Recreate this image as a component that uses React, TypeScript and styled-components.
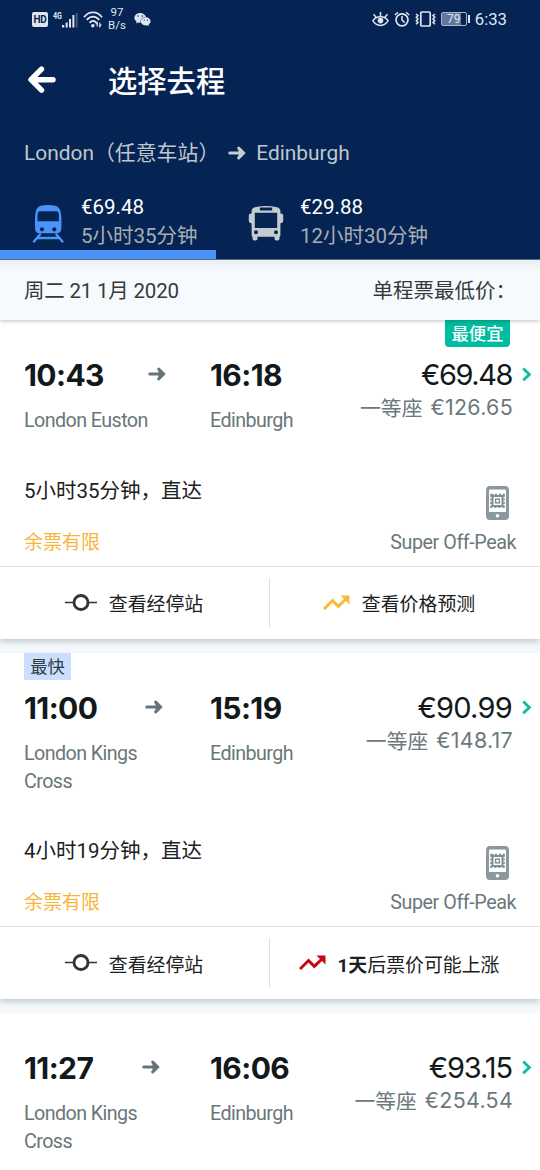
import React from "react";
import styled, { createGlobalStyle } from "styled-components";
import { FaWeixin } from "react-icons/fa";

const Global = createGlobalStyle`
  * { box-sizing: border-box; }
  html, body { margin: 0; padding: 0; }
  body {
    width: 540px;
    height: 1170px;
    overflow: hidden;
    background: #f4f8fb;
    font-family: Roboto, "Noto Sans CJK SC", sans-serif;
    color: #1b2023;
  }
  svg { display: block; flex: none; }
`;

const Screen = styled.div`
  width: 540px;
  height: 1170px;
  overflow: hidden;
  display: flex;
  flex-direction: column;
`;

const Header = styled.header`
  flex: none;
  height: 260px;
  background: #052454;
  display: flex;
  flex-direction: column;
  border-bottom: 1px solid #5f7391;
`;

const StatusBar = styled.div`
  height: 38px;
  flex: none;
  display: flex;
  align-items: center;
  justify-content: space-between;
  padding: 0 32px;
  color: #dfe6f0;
`;

const StatusGroup = styled.div<{ $gap: number; $indent?: number }>`
  display: flex;
  align-items: center;
  gap: ${(p) => p.$gap}px;
  padding-left: ${(p) => p.$indent ?? 0}px;
`;

const HdBadge = styled.span`
  width: 16px;
  height: 15px;
  border-radius: 2px;
  background: #dfe6f0;
  color: #052454;
  font: 700 10px/15px Roboto, sans-serif;
  text-align: center;
  letter-spacing: -0.3px;
`;

const NetSpeed = styled.span`
  width: 18px;
  font-size: 11.5px;
  line-height: 13.5px;
  text-align: center;
  white-space: nowrap;
`;

const Battery = styled.span`
  width: 26px;
  height: 14px;
  border: 1px solid #aab5c8;
  border-radius: 2px;
  background: linear-gradient(90deg, #64769a 79%, transparent 79%);
  font-size: 12px;
  line-height: 13px;
  text-align: center;
`;

const BatteryTip = styled.span`
  width: 2px;
  height: 8px;
  margin-left: 1px;
  background: #dfe6f0;
`;

const Clock = styled.span`
  font-size: 16.7px;
  margin: 0 1px 0 5px;
`;

const TitleBar = styled.div`
  height: 84px;
  flex: none;
  padding-left: 27px;
  display: flex;
  align-items: center;
  gap: 52px;
`;

const Title = styled.h1`
  margin: 0;
  padding-top: 4px;
  font-size: 29.3px;
  font-weight: 500;
  line-height: 40px;
  color: #fff;
`;

const RouteLine = styled.div`
  height: 60px;
  flex: none;
  display: flex;
  align-items: center;
  padding: 1px 0 0 24px;
  font-size: 20.9px;
  line-height: 30px;
  color: #bfc7cd;
  white-space: pre;
`;

const RouteArrow = styled.span`
  margin: 0 10px 0 9px;
`;

const Tabs = styled.nav`
  flex: 1;
  display: flex;
`;

const Tab = styled.div<{ $active?: boolean; $width: number }>`
  width: ${(p) => p.$width}px;
  display: flex;
  gap: 16px;
  padding: 11px 0 0 32px;
  border-bottom: ${(p) => (p.$active ? "9px solid #4a94f9" : "0")};
`;

const TabIcon = styled.span`
  padding-top: 11px;
`;

const TabText = styled.div`
  display: flex;
  flex-direction: column;
  font-size: 20.5px;
  line-height: 28.5px;
  color: #a9adb5;
  white-space: nowrap;
`;

const TabPrice = styled.span`
  color: #fff;
`;

const DateBar = styled.div`
  flex: none;
  height: 60px;
  padding: 0 24px 2px;
  display: flex;
  justify-content: space-between;
  align-items: center;
  background: linear-gradient(#e9eff4, #f6fafd 12px);
  color: #36393b;
  font-size: 20.5px;
  position: relative;
  z-index: 1;
  box-shadow: 0 1px 4px rgba(0, 0, 0, 0.25);
`;

const DateText = styled.span`
  letter-spacing: -0.2px;
`;

const Card = styled.article<{ $last: boolean }>`
  flex: ${(p) => (p.$last ? "1" : "none")};
  position: relative;
  margin-bottom: ${(p) => (p.$last ? 0 : 14)}px;
  background: #fff;
  box-shadow: 0 2px 6px rgba(40, 60, 70, 0.28);
  clip-path: inset(0 0 -14px 0);
`;

const CheapBadge = styled.span`
  position: absolute;
  top: 0;
  right: 30px;
  width: 65px;
  height: 27px;
  border-radius: 0 0 4px 4px;
  background: #00bda1;
  color: #fff;
  font-size: 17.3px;
  font-weight: 500;
  line-height: 29px;
  text-align: center;
`;

const FastBadge = styled.span`
  position: absolute;
  top: 0;
  left: 24px;
  width: 47px;
  height: 27px;
  background: #cbdffc;
  color: #303a44;
  font-size: 17.3px;
  line-height: 29px;
  text-align: center;
`;

const Summary = styled.div`
  padding: 37px 0 0 24px;
  display: flex;
`;

const Leg = styled.div<{ $width: number }>`
  width: ${(p) => p.$width}px;
`;

const TimeRow = styled.div<{ $width?: number }>`
  width: ${(p) => (p.$width ? `${p.$width}px` : "auto")};
  height: 36px;
  display: flex;
  align-items: center;
  justify-content: space-between;

  svg { margin-bottom: 2px; }
`;

const Time = styled.span`
  font: 700 30px/36px Inter, sans-serif;
  letter-spacing: -0.6px;
  color: #12191b;
  white-space: nowrap;
`;

const Station = styled.div`
  margin-top: 14.4px;
  width: 130px;
  font-size: 19.7px;
  line-height: 27.4px;
  letter-spacing: -0.57px;
  color: #697679;
`;

const PriceCol = styled.div`
  flex: 1;
  padding-right: 8px;
  display: flex;
  flex-direction: column;
  align-items: flex-end;
`;

const PriceRow = styled.div`
  height: 36px;
  display: flex;
  align-items: center;
  gap: 10px;
`;

const Price = styled.span<{ $tracking: number }>`
  font: 400 29px/36px Inter, sans-serif;
  letter-spacing: ${(p) => p.$tracking}px;
  color: #12191b;
`;

const FirstClass = styled.div`
  margin-right: 19px;
  display: flex;
  gap: 8px;
  font: 400 20.8px/28px "Noto Sans CJK SC", sans-serif;
  color: #6b787c;
  white-space: nowrap;
`;

const FirstPrice = styled.span`
  font: 400 21.4px/28px Inter, sans-serif;
  letter-spacing: 0.3px;
`;

const Details = styled.div`
  height: 131px;
  padding: 41.4px 24px 0 24px;
  display: flex;
  justify-content: space-between;
`;

const DetailCol = styled.div<{ $end?: boolean }>`
  display: flex;
  flex-direction: column;
  align-items: ${(p) => (p.$end ? "flex-end" : "flex-start")};
`;

const Duration = styled.div`
  height: 30px;
  margin-bottom: 21.5px;
  font-size: 20.5px;
  line-height: 30px;
  color: #1b2023;
`;

const Limited = styled.div`
  font-size: 19px;
  line-height: 30px;
  color: #f7b63a;
`;

const PhoneSlot = styled.div`
  height: 34px;
  margin: 10px 7px 7.5px 0;
`;

const Fare = styled.div`
  font-size: 19.7px;
  line-height: 30px;
  letter-spacing: -0.42px;
  color: #6b787c;
`;

const Actions = styled.div`
  height: 73px;
  border-top: 1px solid #dde2e4;
  display: flex;
  align-items: center;
`;

const Action = styled.div<{ $divider?: boolean }>`
  width: 270px;
  height: 50px;
  display: flex;
  align-items: center;
  justify-content: center;
  gap: 12px;
  padding-right: ${(p) => (p.$divider ? 1 : 12)}px;
  font-size: 18.9px;
  color: #1b2023;
  white-space: nowrap;
  border-right: ${(p) => (p.$divider ? "1px solid #dde0e2" : "0")};
`;

const Arrow = ({ color }: { color: string }) => (
  <svg width={18} height={16} viewBox="0 0 18 16" fill="none" stroke={color} strokeWidth="3.1" strokeLinecap="round">
    <path d="M1.800 8H14M10.700 3.200L15.500 8 10.700 12.800" strokeLinejoin="miter" />
    <path d="M10.500 4L16 8l-5.500 4z" fill={color} stroke="none" />
  </svg>
);

const BackArrow = () => (
  <svg width="29" height="28" viewBox="0 0 29 28" fill="none" stroke="#fff" strokeWidth="5.400" strokeLinecap="round" strokeLinejoin="round">
    <path d="M14.500 3.200L4 13.700 14.500 24.200M5 13.700H26" />
  </svg>
);

const SignalIcon = () => (
  <svg width="25" height="17" viewBox="0 0 25 17" fill="#dfe6f0">
    <text x="0" y="7.500" fontFamily="Roboto" fontSize="9.500" fontWeight="700" textLength="9" lengthAdjust="spacingAndGlyphs">4G</text>
    <path d="M9 14h2.300v2.500H9zM12.700 11.500h2v5h-2zM16 8h2v8.500h-2zM19.400 4h2v12.500h-2z" />
    <path d="M22.800 2h1.800v14.500h-1.800z" opacity=".3" />
  </svg>
);

const WifiIcon = () => (
  <svg width="20" height="17" viewBox="0 0 20 17" fill="none" stroke="#dfe6f0" strokeWidth="1.800">
    <path d="M1 6.200C6-.2 14-.2 19 6.200M3.800 9c3.500-4.400 9-4.400 12.400 0M6.600 11.800c2-2.400 4.800-2.400 6.800 0" />
    <circle cx="9.800" cy="14.700" r="1.800" fill="#dfe6f0" stroke="none" />
    <path d="M14.200 10.800v4.600M16.800 11.800v4.600" strokeWidth="1.200" />
    <path d="M14.200 11l-2 2.300h2zM16.800 16l2.200-2.400h-2.200z" fill="#dfe6f0" stroke="none" />
  </svg>
);

const EyeIcon = () => (
  <svg width="17" height="16" viewBox="0 0 17 16" fill="none" stroke="#dfe6f0" strokeWidth="1.500">
    <path d="M.9 9.700C4.400 4.500 12.600 4.500 16.100 9.700 12.600 16 4.400 16 .9 9.700zM8.500 1v4M1.500 3.200l2.600 3M15.500 3.200l-2.600 3" />
    <circle cx="8.500" cy="9.600" r="2.800" fill="#dfe6f0" stroke="none" />
  </svg>
);

const AlarmIcon = () => (
  <svg width="16" height="16" viewBox="0 0 16 16" fill="none" stroke="#dfe6f0" strokeWidth="1.700">
    <circle cx="8" cy="8.800" r="6" />
    <path d="M8 5v4l2.700 2.600M.8 4L4 1.200M15.200 4L12 1.200" strokeWidth="1.500" />
  </svg>
);

const VibrateIcon = () => (
  <svg width="21" height="16" viewBox="0 0 21 16" fill="none" stroke="#dfe6f0" strokeWidth="1.700">
    <rect x="5.800" y="1" width="9.400" height="14" rx="1" />
    <path d="M1 3l2 1.600L1.300 6.300 3 8 1.300 9.700 3 11.400 1 13.200M20 3l-2 1.600 1.700 1.700L18 8l1.700 1.700L18 11.400l2 1.800" strokeWidth="1.500" />
  </svg>
);

const TrainIcon = () => (
  <svg width="33" height="40" viewBox="0 0 33 40">
    <path
      fillRule="evenodd"
      fill="#4a94f9"
      d="M9 1.700Q16 .3 23 1.700C27.600 2.600 29.400 7 29.400 16v8c0 3.300-1.700 5.300-4.500 5.300H7.500C4.700 29.300 3 27.300 3 24v-8C3 7 4.800 2.600 9 1.700zM8 7.300Q5.700 7.300 5.500 11V17.300H26.900V11Q26.700 7.300 24.400 7.300zM10 23.200a2.100 2.100 0 100 4.200 2.100 2.100 0 100-4.200zM22.300 23.200a2.100 2.100 0 100 4.200 2.100 2.100 0 100-4.200z"
    />
    <path d="M8 30.500L2 37.600M24.400 30.500L30.400 37.600M6 34H26.500" stroke="#4a94f9" strokeWidth="2.400" fill="none" strokeLinecap="round" />
  </svg>
);

const BusIcon = () => (
  <svg width="36" height="40" viewBox="0 0 36 40">
    <path
      fillRule="evenodd"
      fill="#c3cccf"
      d="M7 3.200Q18 .8 29 3.200c2.200.5 3.400 2 3.400 4V9.500h.6c1.400 0 2.200.8 2.200 2v5c0 1.500-.8 2.700-2.800 2.700V31c0 1-.4 1.500-.9 1.700V34.500c0 2.700-5 2.700-5 0v-1.700H9.500V34.500c0 2.700-5 2.700-5 0v-1.800c-.5-.2-.9-.7-.9-1.700V19.200C1.600 19.200.8 18 .8 16.500v-5c0-1.200.8-2 2.200-2H3.600V7.200c0-2 1.200-3.500 3.400-4zM11.800 3.600v2.900h12.400v-2.900zM6.800 8.700v15.300h22.400V8.700zM8 26.200a2 2 0 100 4 2 2 0 100-4zM28 26.200a2 2 0 100 4 2 2 0 100-4z"
    />
  </svg>
);

const Chevron = () => (
  <svg width="10" height="16" viewBox="0 0 10 16" fill="none" stroke="#12b9a3" strokeWidth="2.800">
    <path d="M1.200 1.500L7.400 7.400l-6.200 5.900" />
  </svg>
);

const PhoneIcon = () => (
  <svg width="23" height="34" viewBox="0 0 23 34">
    <path
      fillRule="evenodd"
      fill="#8b999e"
      d="M4 0h15q4 0 4 4v26q0 4-4 4H4q-4 0-4-4V4q0-4 4-4zM4 3.500q-1 0-1 1V26h17V4.500q0-1-1-1zM11.500 28a1.800 1.800 0 100 3.600 1.800 1.800 0 100-3.600z"
    />
    <g fill="none" stroke="#7f8e92">
      <rect x="6.500" y="10" width="10" height="10" strokeWidth="2" />
      <rect x="9.600" y="13.100" width="3.800" height="3.800" strokeWidth="1.400" />
      <path d="M5 8v3M5 12.500v2M5 16v2M5 19.500v2M18 8v3M18 12.500v2M18 16v2M18 19.500v2M4.500 8.500h3M9 8.500h2M13 8.500h2M16.500 8.500h2M4.500 21.300h2M8.500 21.300h2M12.500 21.300h2M16.500 21.300h2" strokeWidth="1.600" />
    </g>
  </svg>
);

const StopsIcon = () => (
  <svg width="32" height="18" viewBox="0 0 32 18" fill="none" stroke="#333638">
    <path d="M0 8.500h9M23 8.500h9" strokeWidth="1.600" />
    <circle cx="16" cy="8.500" r="7" strokeWidth="2.900" />
  </svg>
);

const TrendIcon = ({ color }: { color: string }) => (
  <svg width="27" height="18" viewBox="0 0 27 18">
    <path d="M1 15L9.500 6.500l5.800 5.800L23 5" fill="none" stroke={color} strokeWidth="3" />
    <path d="M17.500 1.600H26.500V10.600z" fill={color} />
  </svg>
);

type Trip = {
  depart: string;
  arrive: string;
  from: string;
  price: string;
  tracking: number;
  first: string;
  legWidth: number;
  badge?: "cheap" | "fast";
  duration?: string;
  trend?: React.ReactNode;
  trendColor?: string;
};

const trips: Trip[] = [
  { depart: "10:43", arrive: "16:18", from: "London Euston", price: "€69.48", tracking: -1.45, first: "€126.65", legWidth: 142, badge: "cheap", duration: "5小时35分钟，直达", trend: "查看价格预测", trendColor: "#fbb931" },
  { depart: "11:00", arrive: "15:19", from: "London Kings Cross", price: "€90.99", tracking: -0.75, first: "€148.17", legWidth: 139, badge: "fast", duration: "4小时19分钟，直达", trend: <span><b>1天</b>后票价可能上涨</span>, trendColor: "#c30a12" },
  { depart: "11:27", arrive: "16:06", from: "London Kings Cross", price: "€93.15", tracking: -1.1, first: "€254.54", legWidth: 136 },
];

const TripCard = ({ trip }: { trip: Trip }) => (
  <Card $last={!trip.duration}>
    {trip.badge === "cheap" && <CheapBadge>最便宜</CheapBadge>}
    {trip.badge === "fast" && <FastBadge>最快</FastBadge>}
    <Summary>
      <Leg $width={186}>
        <TimeRow $width={trip.legWidth}>
          <Time>{trip.depart}</Time>
          <Arrow color="#66757a" />
        </TimeRow>
        <Station>{trip.from}</Station>
      </Leg>
      <Leg $width={110}>
        <TimeRow>
          <Time>{trip.arrive}</Time>
        </TimeRow>
        <Station>Edinburgh</Station>
      </Leg>
      <PriceCol>
        <PriceRow>
          <Price $tracking={trip.tracking}>{trip.price}</Price>
          <Chevron />
        </PriceRow>
        <FirstClass>一等座<FirstPrice>{trip.first}</FirstPrice></FirstClass>
      </PriceCol>
    </Summary>
    {trip.duration && (
      <>
        <Details>
          <DetailCol>
            <Duration>{trip.duration}</Duration>
            <Limited>余票有限</Limited>
          </DetailCol>
          <DetailCol $end>
            <PhoneSlot><PhoneIcon /></PhoneSlot>
            <Fare>Super Off-Peak</Fare>
          </DetailCol>
        </Details>
        <Actions>
          <Action $divider><StopsIcon />查看经停站</Action>
          <Action><TrendIcon color={trip.trendColor ?? "#fbb931"} />{trip.trend}</Action>
        </Actions>
      </>
    )}
  </Card>
);

export default function App() {
  return (
    <>
      <Global />
      <Screen>
        <Header>
          <StatusBar>
            <StatusGroup $gap={5}>
              <HdBadge>HD</HdBadge>
              <SignalIcon />
              <WifiIcon />
              <NetSpeed>97<br />B/s</NetSpeed>
              <StatusGroup $gap={0} $indent={3}><FaWeixin size={17} /></StatusGroup>
            </StatusGroup>
            <StatusGroup $gap={5}>
              <EyeIcon />
              <AlarmIcon />
              <VibrateIcon />
              <StatusGroup $gap={0}>
                <Battery>79</Battery>
                <BatteryTip />
                <Clock>6:33</Clock>
              </StatusGroup>
            </StatusGroup>
          </StatusBar>
          <TitleBar>
            <BackArrow />
            <Title>选择去程</Title>
          </TitleBar>
          <RouteLine>
            <span>London（任意车站）</span>
            <RouteArrow><Arrow color="#c3cccf" /></RouteArrow>
            <span>Edinburgh</span>
          </RouteLine>
          <Tabs>
            <Tab $active $width={216}>
              <TabIcon><TrainIcon /></TabIcon>
              <TabText><TabPrice>€69.48</TabPrice><span>5小时35分钟</span></TabText>
            </Tab>
            <Tab $width={324}>
              <TabIcon><BusIcon /></TabIcon>
              <TabText><TabPrice>€29.88</TabPrice><span>12小时30分钟</span></TabText>
            </Tab>
          </Tabs>
        </Header>
        <DateBar>
          <DateText>周二 21 1月 2020</DateText>
          <span>单程票最低价：</span>
        </DateBar>
        {trips.map((t) => (
          <TripCard key={t.depart} trip={t} />
        ))}
      </Screen>
    </>
  );
}
